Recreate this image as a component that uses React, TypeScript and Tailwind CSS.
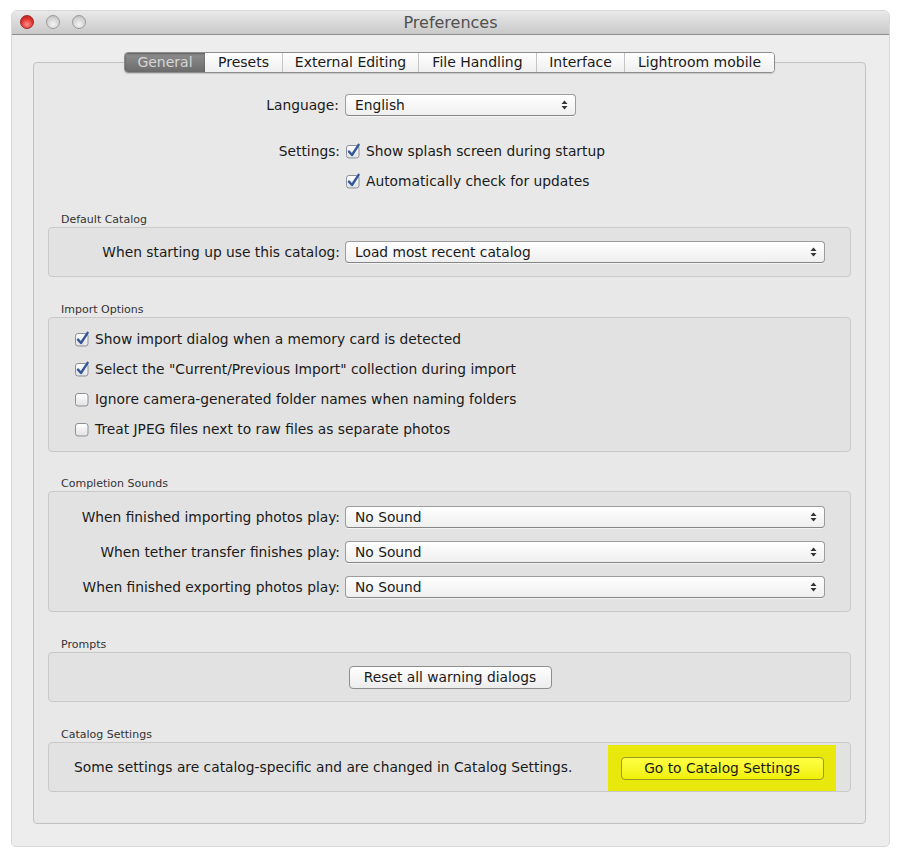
import React from "react";

const FONT = "font-['DejaVu_Sans',sans-serif]";

function Checkbox({ checked }: { checked: boolean }) {
  return (
    <svg width="16" height="16" viewBox="0 0 16 16" className="shrink-0">
      <defs>
        <linearGradient id="cbg" x1="0" y1="0" x2="0" y2="1">
          <stop offset="0" stopColor="#ffffff" />
          <stop offset="1" stopColor="#e2e2e2" />
        </linearGradient>
      </defs>
      <rect x="1.5" y="2.5" width="12.5" height="12.5" rx="2.5" fill="url(#cbg)" stroke="#8a8f99" strokeWidth="1" />
      {checked && (
        <path d="M4 8.6 L7 12 L13.6 1.8" fill="none" stroke="#34579a" strokeWidth="2.4" strokeLinecap="round" strokeLinejoin="round" />
      )}
    </svg>
  );
}

function Dropdown({ value, w }: { value: string; w: string }) {
  return (
    <div
      className={`${w} h-[22px] flex items-center justify-between rounded-[4px] border border-[#9d9d9d] border-b-[#858585] bg-gradient-to-b from-[#ffffff] to-[#efefef] pl-[9px] pr-[7px] shadow-[0_1px_0_rgba(255,255,255,0.6)]`}
    >
      <span className="text-[13.8px] text-[#1a1a1a]">{value}</span>
      <svg width="7" height="10" viewBox="0 0 7 10">
        <path d="M3.5 0.5 L6.5 4 L0.5 4 Z" fill="#333" />
        <path d="M3.5 9.5 L6.5 6 L0.5 6 Z" fill="#333" />
      </svg>
    </div>
  );
}

function Button({ label, w, yellow }: { label: string; w: string; yellow?: boolean }) {
  return (
    <div
      className={`${w} h-[23px] flex items-center justify-center rounded-[4px] border ${
        yellow
          ? "border-[#9a9a20] bg-gradient-to-b from-[#ffff40] to-[#f0f000]"
          : "border-[#8e8e8e] bg-gradient-to-b from-[#ffffff] to-[#ececec]"
      } text-[13.8px] text-[#1a1a1a]`}
    >
      {label}
    </div>
  );
}

function Section({ title, children, className }: { title: string; children: React.ReactNode; className?: string }) {
  return (
    <div className={className}>
      <div className="h-[16px] pl-[13px] pt-[2px] text-[11px] leading-[14px] text-[#333]">{title}</div>
      <div className="rounded-[4px] border border-[#c9c9c9] bg-[#e2e2e2]">{children}</div>
    </div>
  );
}

function LabeledRow({ label, children }: { label: string; children: React.ReactNode }) {
  return (
    <div className="flex items-center h-[22px]">
      <div className="w-[296px] text-right text-[13.8px] text-[#1a1a1a] pr-[5px]">{label}</div>
      {children}
    </div>
  );
}

function CheckRow({ checked, label }: { checked: boolean; label: string }) {
  return (
    <div className="flex items-center h-[22px] gap-[5px]">
      <Checkbox checked={checked} />
      <span className="text-[13.8px] text-[#1a1a1a]">{label}</span>
    </div>
  );
}

const tabs = [
  { name: "General", w: "w-[80px]" },
  { name: "Presets", w: "w-[77px]" },
  { name: "External Editing", w: "w-[136px]" },
  { name: "File Handling", w: "w-[118px]" },
  { name: "Interface", w: "w-[88px]" },
  { name: "Lightroom mobile", w: "w-[150px]" },
];

export default function App() {
  return (
    <div className={`${FONT} bg-white w-[900px] h-[858px] pt-[10px] pl-[11px]`}>
      <div className="w-[879px] h-[837px] rounded-t-[6px] rounded-b-[5px] bg-[#ededed] border border-[#d8d8d8] flex flex-col overflow-hidden">
        {/* Title bar */}
        <div className="h-[24px] shrink-0 relative flex items-center justify-center bg-gradient-to-b from-[#e9e9e9] to-[#c9c9c9] border-b border-[#8e8e8e]">
          <div className="absolute left-[8px] top-[4px] flex gap-[12px]">
            <div className="w-[14px] h-[14px] rounded-full border border-[#a0252a] bg-[radial-gradient(circle_at_50%_70%,#ff8f8a,#e0332e_55%,#b21c1c)]" />
            <div className="w-[14px] h-[14px] rounded-full border border-[#9a9a9a] bg-[radial-gradient(circle_at_50%_70%,#f4f4f4,#d2d2d2_60%,#b4b4b4)]" />
            <div className="w-[14px] h-[14px] rounded-full border border-[#9a9a9a] bg-[radial-gradient(circle_at_50%_70%,#f4f4f4,#d2d2d2_60%,#b4b4b4)]" />
          </div>
          <span className="text-[16px] text-[#505050]">Preferences</span>
        </div>

        {/* Content */}
        <div className="flex-1 pl-[21px] pr-[23px] pt-[17px]">
          <div className="relative">
            {/* Tabs */}
            <div className="flex justify-center relative z-10 h-[21px]">
              <div className="flex rounded-[4px] border border-[#8c8c8c] overflow-hidden shadow-[0_1px_1px_rgba(0,0,0,0.15)]">
                {tabs.map((t, i) =>
                  i === 0 ? (
                    <div
                      key={t.name}
                      className={`${t.w} h-[19px] flex items-center justify-center text-[14px] text-[#d6d6d6] bg-gradient-to-b from-[#8e8e8e] to-[#6c6c6c] shadow-[inset_0_1px_2px_rgba(0,0,0,0.35)]`}
                    >
                      {t.name}
                    </div>
                  ) : (
                    <div
                      key={t.name}
                      className={`${t.w} h-[19px] flex items-center justify-center text-[14px] text-[#1a1a1a] bg-gradient-to-b from-[#ffffff] to-[#efefef] ${
                        i > 1 ? "border-l border-[#c4c4c4]" : ""
                      }`}
                    >
                      {t.name}
                    </div>
                  )
                )}
              </div>
            </div>
            {/* Tab box */}
            <div className="-mt-[11px] h-[762px] rounded-[4px] border border-[#c2c2c2] bg-[#e8e8e8] px-[14px] pt-[31px]">
              {/* Top area */}
              <div className="pl-[1px]">
                <div className="flex items-center h-[22px]">
                  <div className="w-[296px] text-right text-[13.8px] text-[#1a1a1a] pr-[6px]">Language:</div>
                  <Dropdown value="English" w="w-[231px]" />
                </div>
                <div className="flex items-center h-[22px] mt-[24px]">
                  <div className="w-[296px] text-right text-[13.8px] text-[#1a1a1a] pr-[5px]">Settings:</div>
                  <CheckRow checked label="Show splash screen during startup" />
                </div>
                <div className="flex items-center h-[22px] mt-[8px]">
                  <div className="w-[296px] pr-[5px]" />
                  <CheckRow checked label="Automatically check for updates" />
                </div>
              </div>

              <Section title="Default Catalog" className="mt-[19px]">
                <div className="pt-[13px] pb-[13px] pr-[25px]">
                  <LabeledRow label="When starting up use this catalog:">
                    <Dropdown value="Load most recent catalog" w="flex-1" />
                  </LabeledRow>
                </div>
              </Section>

              <Section title="Import Options" className="mt-[24px]">
                <div className="pt-[10px] pb-[11px] pl-[25px] flex flex-col gap-[8px]">
                  <CheckRow checked label="Show import dialog when a memory card is detected" />
                  <CheckRow checked label={'Select the "Current/Previous Import" collection during import'} />
                  <CheckRow checked={false} label="Ignore camera-generated folder names when naming folders" />
                  <CheckRow checked={false} label="Treat JPEG files next to raw files as separate photos" />
                </div>
              </Section>

              <Section title="Completion Sounds" className="mt-[23px]">
                <div className="pt-[14px] pb-[13px] pr-[25px] flex flex-col gap-[13px]">
                  <LabeledRow label="When finished importing photos play:">
                    <Dropdown value="No Sound" w="flex-1" />
                  </LabeledRow>
                  <LabeledRow label="When tether transfer finishes play:">
                    <Dropdown value="No Sound" w="flex-1" />
                  </LabeledRow>
                  <LabeledRow label="When finished exporting photos play:">
                    <Dropdown value="No Sound" w="flex-1" />
                  </LabeledRow>
                </div>
              </Section>

              <Section title="Prompts" className="mt-[24px]">
                <div className="pt-[13px] pb-[12px] flex justify-center">
                  <div className="pl-[1px]">
                    <Button label="Reset all warning dialogs" w="w-[203px]" />
                  </div>
                </div>
              </Section>

              <Section title="Catalog Settings" className="mt-[24px]">
                <div className="flex items-stretch h-[48px]">
                  <div className="flex-1 flex items-center pl-[25px] text-[13.8px] text-[#1a1a1a]">
                    Some settings are catalog-specific and are changed in Catalog Settings.
                  </div>
                  <div className="w-[228px] mt-[2px] mr-[14px] bg-[#e8e80c] flex items-center justify-center pt-[1px]">
                    <Button label="Go to Catalog Settings" w="w-[203px]" yellow />
                  </div>
                </div>
              </Section>
            </div>
          </div>
        </div>
      </div>
    </div>
  );
}
